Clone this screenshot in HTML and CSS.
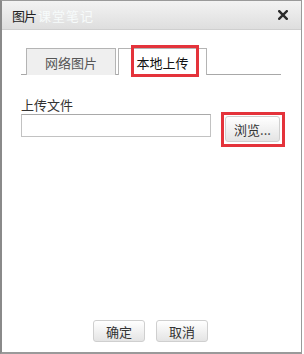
FILE: index.html
```html
<!DOCTYPE html>
<html lang="zh">
<head>
<meta charset="utf-8">
<link rel="stylesheet" href="styles.css">
</head>
<body>
<div class="dialog">
  <div class="titlebar">
    <span class="title">图片</span><span class="watermark">课堂笔记</span>
    <svg class="close" width="10" height="10" viewBox="0 0 10 10"><path d="M1.2 1.2 L8.8 8.8 M8.8 1.2 L1.2 8.8" stroke="#2b2b2b" stroke-width="2.4" stroke-linecap="square"/></svg>
  </div>
  <div class="content">
    <div class="tabs">
      <div class="tab">网络图片</div>
      <div class="tab active">本地上传<span class="mark mark-tab"></span></div>
    </div>
    <div class="label">上传文件</div>
    <div class="filerow">
      <div class="input"></div>
      <div class="browse-wrap">
        <button class="btn browse">浏览...</button>
        <span class="mark mark-browse"></span>
      </div>
    </div>
  </div>
  <div class="footer">
    <button class="btn foot">确定</button>
    <button class="btn foot">取消</button>
  </div>
</div>
</body>
</html>
```
FILE: styles.css
```css
html, body {
  margin: 0;
  padding: 0;
  background: #ffffff;
}
body {
  font-family: "Noto Sans CJK SC", "Noto Sans", sans-serif;
  font-size: 13px;
  color: #333;
}
.dialog {
  box-sizing: border-box;
  width: 302px;
  height: 354px;
  border: 1px solid #9a9a9a;
  border-left: 2px solid #8a8a8a;
  border-bottom: 2px solid #9a9a9a;
  display: flex;
  flex-direction: column;
  background: #fff;
}
.titlebar {
  height: 29px;
  box-sizing: border-box;
  background: linear-gradient(#f3f3f3, #dedede);
  border-bottom: 1px solid #cfcfcf;
  display: flex;
  align-items: center;
  padding: 0 13px 0 10px;
}
.title {
  font-size: 13px;
  color: #222;
  letter-spacing: -1px;
}
.watermark {
  font-size: 13px;
  color: #f7fbfb;
  margin-left: 2px;
  letter-spacing: 1px;
}
.close {
  margin-left: auto;
  display: block;
}
.content {
  flex: 1;
  padding: 18px 19px 0 19px;
}
.tabs {
  display: flex;
  gap: 2px;
  padding-left: 5px;
  border-bottom: 1px solid #a8a8a8;
  width: 255px;
  height: 26px;
}
.tab {
  box-sizing: border-box;
  width: 90px;
  height: 27px;
  border: 1px solid #b4b4b4;
  border-bottom: none;
  background: #efefef;
  color: #555;
  display: flex;
  align-items: center;
  justify-content: center;
  font-size: 13px;
  position: relative;
}
.tab.active {
  width: 89px;
  background: #fff;
  color: #111;
  margin-bottom: -1px;
}
.mark {
  position: absolute;
  border: 3px solid #e4333b;
  box-sizing: border-box;
  pointer-events: none;
}
.mark-tab {
  left: 12px;
  top: -4px;
  width: 68px;
  height: 32px;
}
.label {
  margin-top: 21px;
  font-size: 13px;
  line-height: 17px;
  color: #333;
}
.filerow {
  display: flex;
  align-items: flex-start;
  margin-top: 1px;
}
.input {
  box-sizing: border-box;
  width: 190px;
  height: 23px;
  border: 1px solid #c2c2c2;
  border-top-color: #a9a9a9;
  background: #fff;
}
.browse-wrap {
  position: relative;
  margin-left: 14px;
  margin-top: 2px;
}
.btn {
  font-family: "Noto Sans CJK SC", "Noto Sans", sans-serif;
  font-size: 13px;
  color: #333;
  border: 1px solid #cfcfcf;
  border-radius: 3px;
  background: linear-gradient(#ffffff, #e4e4e4);
  padding: 0;
  line-height: 1;
}
.browse {
  width: 55px;
  height: 26px;
  display: block;
}
.mark-browse {
  left: -4px;
  top: -4px;
  width: 64px;
  height: 35px;
}
.footer {
  display: flex;
  justify-content: center;
  gap: 11px;
  padding: 0 0 10px 0;
  margin-left: -2px;
}
.foot {
  width: 52px;
  height: 22px;
}
```
